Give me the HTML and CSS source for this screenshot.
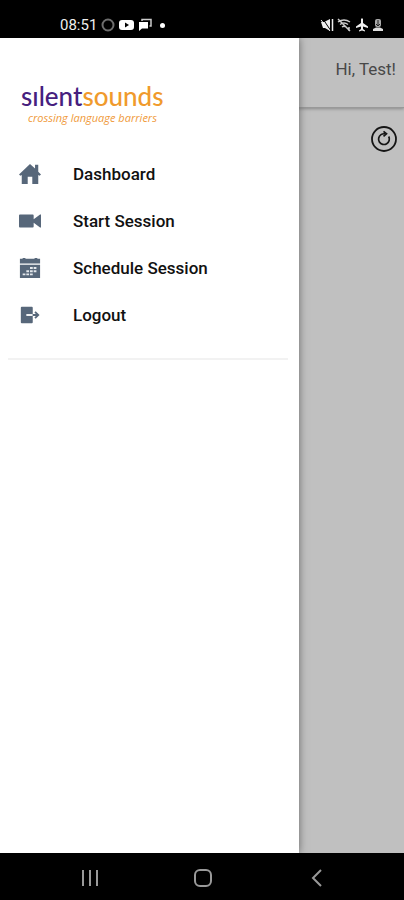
FILE: index.html
```html
<!DOCTYPE html>
<html lang="en">
<head>
<meta charset="utf-8">
<meta name="viewport" content="width=device-width, initial-scale=1">
<title>Silent Sounds</title>
<link rel="stylesheet" href="styles.css">
</head>
<body>
<header class="status">
  <div class="status-group">
    <time class="clock">08:51</time>
    <svg width="14" height="14" viewBox="0 0 14 14" fill="none" stroke="#6e6e6e" stroke-width="2"><circle cx="7" cy="7" r="5.5"/></svg>
    <svg width="15" height="14" viewBox="0 0 15 14"><rect y="2" width="15" height="10" rx="3" fill="#fff"/><path d="M6 4.5v5L10 7z" fill="#000"/></svg>
    <svg width="14" height="14" viewBox="0 0 14 14"><path d="M4 3V1.5h9V8h-1.500" fill="none" stroke="#ccc" stroke-width="1.500"/><path d="M1 4h9v6.500H4L1 13z" fill="#fff"/></svg>
    <span class="dot"></span>
  </div>
  <div class="status-group icons">
    <svg width="14" height="14" viewBox="0 0 14 14"><path d="M1 4h3l6-3v12L5 10H3z" fill="#eee"/><path d="M12.500 1v12" stroke="#eee" stroke-width="1.500"/><path d="M3 1l8 12" stroke="#000"/><path d="M1 2l9 11" stroke="#eee"/></svg>
    <svg width="15" height="14" viewBox="0 0 15 14" fill="none" stroke="#ccc" stroke-width="1.500"><path d="M1 4q6-4 12 0M3 6.500q4-3 8 0M5 9q2-1.500 4 0M1 1l12 12M12 9v4"/></svg>
    <svg width="14" height="14" viewBox="0 0 14 14" fill="#eee"><path d="M6 1q1-1.500 2 0v4l5 3.500V10L8 8.500V11l2 1.500v1L7 12.500l-3 1v-1L6 11V8.500L1 10V8.500L6 5z"/></svg>
    <svg width="12" height="14" viewBox="0 0 12 14"><rect x="3" y="1" width="6" height="8" rx="2" fill="#aaa"/><path d="M6 2v6M4 6l2 2 2-2" stroke="#222" fill="none"/><path d="M1 13v-2l3-1.500h4L11 11v2z" fill="#ddd"/></svg>
  </div>
</header>
<div class="app">
  <main class="page">
    <div class="topbar">Hi, Test!</div>
    <div class="tools">
      <button class="refresh" aria-label="Refresh">
        <svg width="28" height="28" viewBox="0 0 28 28" fill="none" stroke="#151515"><circle cx="14" cy="14" r="12" stroke-width="1.800"/><path d="M18.700 11.500A5.400 5.400 0 1 1 11 9.600q1.500-1 4-.8" stroke-width="1.700"/><path d="M13.500 6.300l3 2.500-3 2.500" stroke-width="1.700"/></svg>
      </button>
    </div>
  </main>
  <aside class="drawer">
    <div class="brand">
      <div class="wordmark">sılent<span>sounds</span></div>
      <div class="tagline">crossing language barriers</div>
    </div>
    <nav class="menu">
      <a href="#dashboard"><svg viewBox="0 0 24 24"><path d="M12 1L0 12.500l1.500 1.500L3 13v10h6.500v-8h5v8H21V13l1.500 1 1.500-1.500-3-3V2h-3.500v4z"/></svg>Dashboard</a>
      <a href="#start"><svg viewBox="0 0 24 24"><path d="M1 5h14a1 1 0 0 1 1 1v4l7-5h1v14h-1l-7-5v4a1 1 0 0 1-1 1H1a1 1 0 0 1-1-1V6a1 1 0 0 1 1-1z"/></svg>Start Session</a>
      <a href="#schedule"><svg viewBox="0 0 24 24"><path d="M1 2h3V1h3v1h10V1h3v1h3v5H1zM1 8.500h22V23H1z"/><path class="cut" d="M12 11h3v2h-3zM16 11h3v2h-3zM8 14.500h3v2H8zM12 14.500h3v2h-3zM16 14.500h3v2h-3zM4 18h3v2H4zM8 18h3v2H8zM12 18h3v2h-3z"/></svg>Schedule Session</a>
      <a href="#logout"><svg viewBox="0 0 24 24"><path d="M3 3h11a1 1 0 0 1 1 1v16a1 1 0 0 1-1 1H3a1 1 0 0 1-1-1V4a1 1 0 0 1 1-1z"/><path class="gap" d="M8 12h7"/><path class="line" d="M15 12h6M17.500 8.500L21 12l-3.500 3.500"/></svg>Logout</a>
    </nav>
    <hr>
  </aside>
</div>
<footer class="navbar">
  <button aria-label="Recent apps"><svg width="20" height="20" viewBox="0 0 20 20"><path d="M3 2v16M10 2v16M17 2v16"/></svg></button>
  <button aria-label="Home"><svg width="20" height="20" viewBox="0 0 20 20"><rect x="2" y="2" width="16" height="16" rx="5"/></svg></button>
  <button aria-label="Back"><svg width="20" height="20" viewBox="0 0 20 20"><path d="M15 2L7 10l8 8"/></svg></button>
</footer>
</body>
</html>
```
FILE: styles.css
```css
* {
  box-sizing: border-box;
}

body {
  margin: 0;
  min-height: 100vh;
  display: flex;
  flex-direction: column;
  background: #000;
  font-family: Roboto, sans-serif;
  color: #111;
}

svg {
  display: block;
  flex: none;
}

button {
  padding: 0;
  border: 0;
  background: none;
}

.status {
  height: 38px;
  padding: 12px 20px 0 60px;
  display: flex;
  justify-content: space-between;
}

.status-group {
  height: 26px;
  display: flex;
  align-items: center;
  gap: 4px;
}

.icons {
  gap: 3px;
}

.clock {
  font-size: 15px;
  color: #eee;
}

.dot {
  width: 5px;
  height: 5px;
  margin-left: 4px;
  border-radius: 50%;
  background: #fff;
}

.app {
  position: relative;
  flex: 1;
  display: flex;
  overflow: hidden;
  background: #c0c0c0;
}

.page {
  flex: 1;
}

.topbar {
  height: 70px;
  padding: 0 8px 8px;
  display: flex;
  align-items: center;
  justify-content: flex-end;
  border-bottom: 1px solid #999;
  box-shadow: 0 1px 3px #888;
  font-size: 17px;
  color: #484848;
}

.tools {
  display: flex;
  justify-content: flex-end;
  padding: 17px 6px;
}

.drawer {
  position: absolute;
  top: 0;
  bottom: 0;
  left: 0;
  width: 74%;
  padding: 42px 11px 0 8px;
  background: #fff;
  box-shadow: 0 0 8px #666;
}

.brand {
  height: 70px;
  padding-left: 13px;
}

.wordmark {
  font-family: Lato, sans-serif;
  font-size: 26px;
  line-height: 32px;
  font-weight: 500;
  color: #46207e;
}

.wordmark span {
  color: #f09a2c;
}

.tagline {
  padding-left: 7px;
  font-family: "Open Sans", sans-serif;
  font-size: 11px;
  line-height: 12px;
  font-style: italic;
  font-weight: 500;
  color: #f09a3a;
}

.menu a {
  height: 47px;
  padding-left: 11px;
  display: flex;
  align-items: center;
  gap: 32px;
  font-size: 17px;
  font-weight: 500;
  color: #111;
  text-decoration: none;
}

.menu svg {
  width: 22px;
  height: 22px;
  fill: #57677a;
}

.menu .cut {
  fill: #e4e8ec;
}

.menu .gap,
.menu .line {
  fill: none;
  stroke: #57677a;
  stroke-width: 2;
}

.menu .gap {
  stroke: #fff;
}

hr {
  margin: 20px 0 0;
  border: 0;
  border-top: 2px solid #f2f2f2;
}

.navbar {
  height: 47px;
  padding: 2px 32px 0 34px;
  display: flex;
}

.navbar button {
  flex: 1;
  display: flex;
  align-items: center;
  justify-content: center;
}

.navbar svg {
  fill: none;
  stroke: #999;
  stroke-width: 2;
}
```
